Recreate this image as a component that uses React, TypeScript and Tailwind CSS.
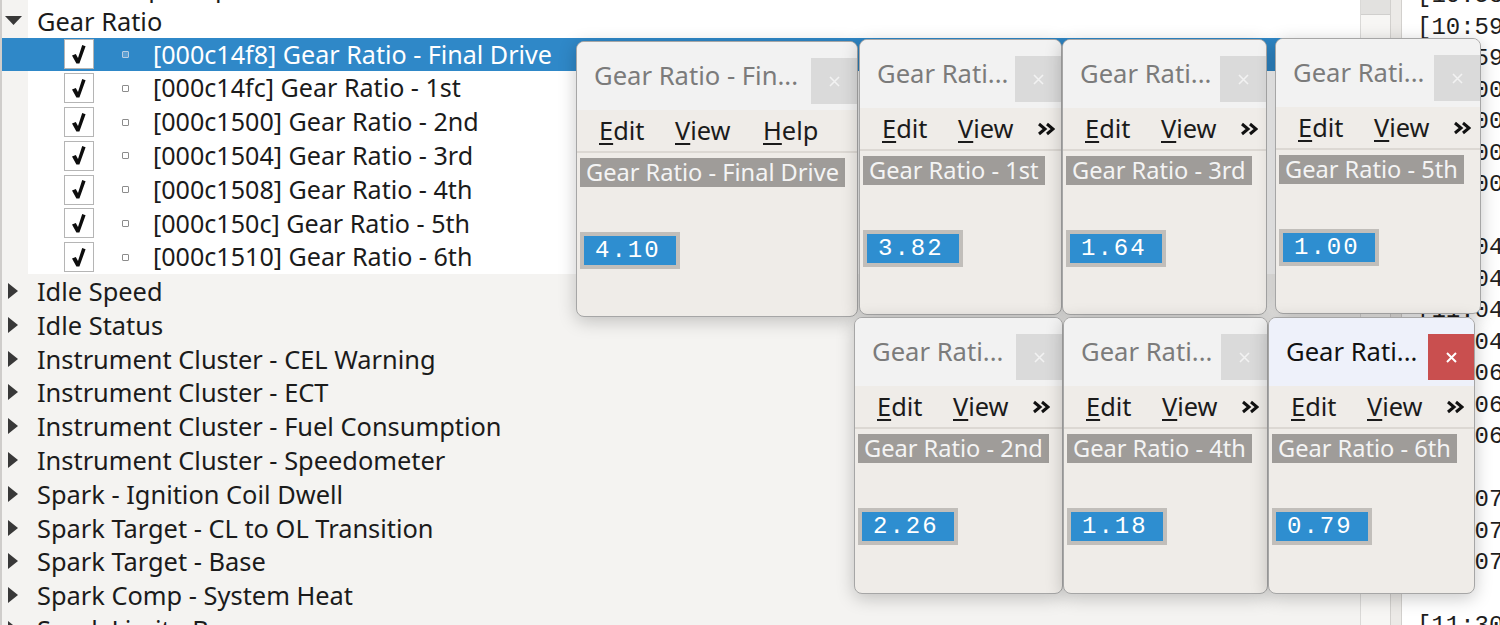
import React from "react";

type Group = { kind: "group"; label: string; expanded?: boolean; white?: boolean };
type Child = { kind: "child"; label: string; selected?: boolean };
type Item = Group | Child;

const items: Item[] = [
  { kind: "group", label: "Fuel Pump Output", white: true },
  { kind: "group", label: "Gear Ratio", expanded: true, white: true },
  { kind: "child", label: "[000c14f8] Gear Ratio - Final Drive", selected: true },
  { kind: "child", label: "[000c14fc] Gear Ratio - 1st" },
  { kind: "child", label: "[000c1500] Gear Ratio - 2nd" },
  { kind: "child", label: "[000c1504] Gear Ratio - 3rd" },
  { kind: "child", label: "[000c1508] Gear Ratio - 4th" },
  { kind: "child", label: "[000c150c] Gear Ratio - 5th" },
  { kind: "child", label: "[000c1510] Gear Ratio - 6th" },
  { kind: "group", label: "Idle Speed" },
  { kind: "group", label: "Idle Status" },
  { kind: "group", label: "Instrument Cluster - CEL Warning" },
  { kind: "group", label: "Instrument Cluster - ECT" },
  { kind: "group", label: "Instrument Cluster - Fuel Consumption" },
  { kind: "group", label: "Instrument Cluster - Speedometer" },
  { kind: "group", label: "Spark - Ignition Coil Dwell" },
  { kind: "group", label: "Spark Target - CL to OL Transition" },
  { kind: "group", label: "Spark Target - Base" },
  { kind: "group", label: "Spark Comp - System Heat" },
  { kind: "group", label: "Spark Limit - Base" },
];

const logLines = [
  "[10:58:51] Session started",
  "[10:59:02] Connecting to ECU...",
  "[10:59:14] Connected",
  "[11:00:01] Reading tables",
  "[11:00:09] Reading tables",
  "[11:00:22] Reading tables",
  "[11:00:41] Done",
  "",
  "[11:04:10] Opened Gear Ratio",
  "[11:04:12] Opened Gear Ratio",
  "[11:04:15] Opened Gear Ratio",
  "[11:04:19] Opened Gear Ratio",
  "[11:06:02] Opened Gear Ratio",
  "[11:06:05] Opened Gear Ratio",
  "[11:06:09] Opened Gear Ratio",
  "",
  "[11:07:30] Value changed",
  "[11:07:34] Value changed",
  "[11:07:38] Value changed",
  "",
  "[11:30:00] Idle",
];

function RightTri() {
  return (
    <svg width="10" height="16" viewBox="0 0 10 16">
      <polygon points="0,0 10,8 0,16" fill="#383838" />
    </svg>
  );
}

function DownTri() {
  return (
    <svg width="17" height="9" viewBox="0 0 17 9">
      <polygon points="0,0 17,0 8.5,9" fill="#383838" />
    </svg>
  );
}

function Check() {
  return (
    <svg width="14" height="19" viewBox="0 0 14 19">
      <polygon points="0,10.5 3.8,9 6,13 10.2,0 13.6,1.3 7.4,18.5 4.4,18.5" fill="#0d0d0d" />
    </svg>
  );
}

function TreeRow({ item }: { item: Item }) {
  if (item.kind === "group") {
    return (
      <div className="h-[33.8px] flex items-center">
        <div className={`w-[26px] h-full flex items-center ${item.expanded ? "pl-[3px]" : "pl-[6px]"}`}>
          {item.expanded ? <DownTri /> : <RightTri />}
        </div>
        <div className={`flex-1 h-full flex items-center pl-[9px] ${item.white ? "bg-white" : ""}`}>
          <span className="text-[25.4px] text-[#1b1b1b] whitespace-nowrap">{item.label}</span>
        </div>
      </div>
    );
  }
  const sel = !!item.selected;
  return (
    <div className={`h-[33.8px] flex items-center ${sel ? "bg-[#2f88c8]" : ""}`}>
      <div className="w-[26px] h-full" />
      <div className={`flex-1 h-full flex items-center ${sel ? "" : "bg-white"}`}>
        <div className="ml-[36px] w-[30px] h-[30px] bg-white border border-[#b5b5b5] flex items-center justify-center">
          <Check />
        </div>
        <div
          className={`ml-[28px] w-[7px] h-[7px] border rounded-[1px] ${
            sel ? "border-[#b7cde3] bg-[#5d9fd2]" : "border-[#8c8c8c] bg-white"
          }`}
        />
        <span className={`ml-[24px] text-[25.1px] whitespace-nowrap ${sel ? "text-white" : "text-[#1b1b1b]"}`}>
          {item.label}
        </span>
      </div>
    </div>
  );
}

function CloseIcon({ active }: { active?: boolean }) {
  return (
    <svg width="11" height="11" viewBox="0 0 11 11">
      <path d="M1 1 L10 10 M10 1 L1 10" stroke={active ? "#ffffff" : "#f2f2f2"} strokeWidth={active ? 2 : 1.6} />
    </svg>
  );
}

function Chevrons() {
  return (
    <svg width="18" height="14" viewBox="0 0 18 14">
      <path d="M2 2 L8 7 L2 12 M10 2 L16 7 L10 12" stroke="#111" strokeWidth="3" fill="none" />
    </svg>
  );
}

type WinProps = {
  pos: string;
  title: string;
  label: string;
  value: string;
  full?: boolean;
  active?: boolean;
};

function Win({ pos, title, label, value, full, active }: WinProps) {
  return (
    <div
      className={`absolute ${pos} flex flex-col rounded-[8px] border border-[#a6a6a6] bg-[#efece8] overflow-hidden shadow-[0_4px_18px_rgba(0,0,0,0.22)]`}
    >
      <div className={`h-[68px] shrink-0 flex items-start justify-between ${active ? "bg-[#eef1fa]" : "bg-[#f2f2f2]"}`}>
        <span
          className={`self-center pl-[17px] text-[25.6px] whitespace-nowrap ${active ? "text-[#111]" : "text-[#7b7b7b]"}`}
        >
          {title}
        </span>
        <div
          className={`mt-[16px] w-[46px] h-[46px] shrink-0 flex items-center justify-center ${
            active ? "bg-[#c94f4f]" : "bg-[#dadada]"
          }`}
        >
          <CloseIcon active={active} />
        </div>
      </div>
      <div className="h-[43px] shrink-0 border-b-2 border-[#dcd8d3] flex items-center text-[25.4px] text-[#1b1b1b] whitespace-nowrap">
        <span className="ml-[22px] w-[76px]">
          <span className="underline decoration-2 underline-offset-[3px]">E</span>dit
        </span>
        <span className={full ? "w-[88px]" : "w-[79px]"}>
          <span className="underline decoration-2 underline-offset-[3px]">V</span>iew
        </span>
        {full ? (
          <span>
            <span className="underline decoration-2 underline-offset-[3px]">H</span>elp
          </span>
        ) : (
          <Chevrons />
        )}
      </div>
      <div className="flex-1 pl-[3px] pt-[5px] flex flex-col items-start">
        <div className="h-[29px] px-[6px] bg-[#9f9c99] text-[#f4f4f4] text-[23.6px] leading-[28px] whitespace-nowrap">
          {label}
        </div>
        <div className="mt-[45px] w-[100px] h-[37px] bg-[#c1beba] p-[4px]">
          <div className="h-full bg-[#2e8ed0] flex items-center pl-[11px] font-['Liberation_Mono',monospace] text-[24px] text-white tracking-[2px]">
            {value}
          </div>
        </div>
      </div>
    </div>
  );
}

export default function App() {
  return (
    <div className="relative w-[1500px] h-[625px] overflow-hidden bg-[#f4f3f1] flex font-['Noto_Sans',sans-serif]">
      <div className="w-[1360px] h-full shrink-0 overflow-hidden border-l-2 border-[#cfcdcb]">
        <div className="-mt-[30px]">
          {items.map((it, i) => (
            <TreeRow key={i} item={it} />
          ))}
        </div>
      </div>
      <div className="w-[30px] h-full shrink-0 bg-[#f7f6f4] border-l border-[#dad9d7] flex flex-col">
        <div className="h-[15px] bg-[#e2e1df] border-b border-[#d0cfcd]" />
      </div>
      <div className="w-[12px] h-full shrink-0 bg-[#eceae7] border-x border-[#d2d0cd]" />
      <div className="flex-1 h-full bg-white overflow-hidden">
        <div className="-mt-[20px] pl-[15px] font-['Liberation_Mono',monospace] text-[24px] text-[#1e1e1e] leading-[31.5px] whitespace-nowrap">
          {logLines.map((l, i) => (
            <div key={i} className="h-[31.5px]">
              {l || "\u00a0"}
            </div>
          ))}
        </div>
      </div>

      <Win pos="left-[576px] top-[41px] w-[282px] h-[276px]" title="Gear Ratio - Fin..." label="Gear Ratio - Final Drive" value="4.10" full />
      <Win pos="left-[859px] top-[39px] w-[203px] h-[276px]" title="Gear Rati..." label="Gear Ratio - 1st" value="3.82" />
      <Win pos="left-[1062px] top-[39px] w-[205px] h-[276px]" title="Gear Rati..." label="Gear Ratio - 3rd" value="1.64" />
      <Win pos="left-[1275px] top-[38px] w-[206px] h-[276px]" title="Gear Rati..." label="Gear Ratio - 5th" value="1.00" />
      <Win pos="left-[854px] top-[317px] w-[209px] h-[277px]" title="Gear Rati..." label="Gear Ratio - 2nd" value="2.26" />
      <Win pos="left-[1063px] top-[317px] w-[205px] h-[277px]" title="Gear Rati..." label="Gear Ratio - 4th" value="1.18" />
      <Win pos="left-[1268px] top-[317px] w-[207px] h-[277px]" title="Gear Rati..." label="Gear Ratio - 6th" value="0.79" active />
    </div>
  );
}
